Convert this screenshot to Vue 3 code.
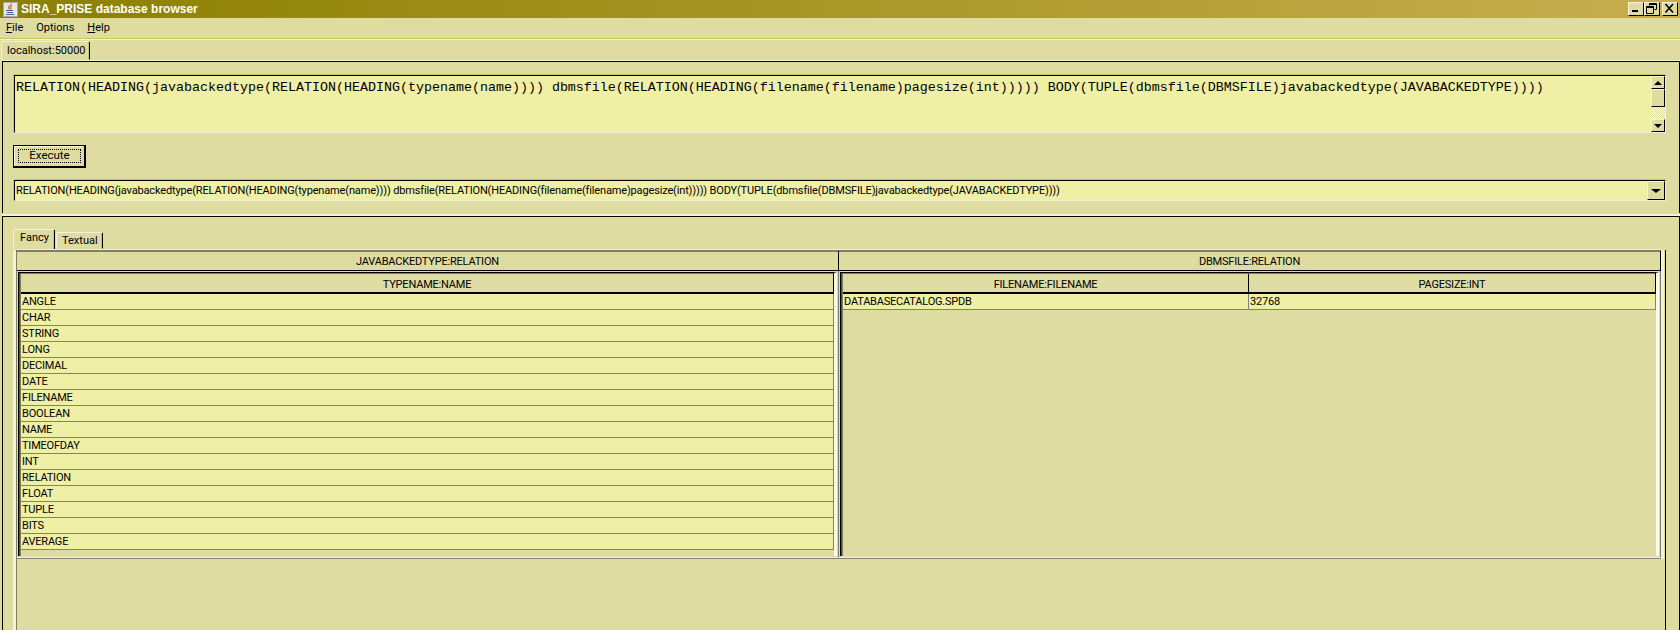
<script setup>
const rows = ['ANGLE','CHAR','STRING','LONG','DECIMAL','DATE','FILENAME','BOOLEAN','NAME','TIMEOFDAY','INT','RELATION','FLOAT','TUPLE','BITS','AVERAGE']
const expr = 'RELATION(HEADING(javabackedtype(RELATION(HEADING(typename(name)))) dbmsfile(RELATION(HEADING(filename(filename)pagesize(int))))) BODY(TUPLE(dbmsfile(DBMSFILE)javabackedtype(JAVABACKEDTYPE))))'
</script>

<template>
  <div class="win">
    <header class="title">
      <svg class="jicon" width="15" height="15" viewBox="0 0 15 15">
        <rect x="0.5" y="0.5" width="14" height="14" fill="#e6e6ea" stroke="#a8a8c0"/>
        <path d="M8.500 1.500C6.500 3.500 9.500 4.500 7.500 7.500M6.500 3.500C4.500 5.500 6.500 6.500 6 7.500" fill="none" stroke="#d8641c" stroke-width="1.3"/>
        <path d="M3 8.500h7M4 10.500h6M3 12.500h8" stroke="#44659a" stroke-width="1.1"/>
      </svg>
      <span class="title-text">SIRA_PRISE database browser</span>
      <div class="winbtns">
        <button class="wb"><svg width="15" height="13" viewBox="0 0 15 13"><path d="M4 8h6v2H4z" fill="#000"/></svg></button>
        <button class="wb"><svg width="15" height="13" viewBox="0 0 15 13"><path d="M5.500 1.500h7v6h-2M5.500 1.500v2M5.500 2.500h7M2.500 4.500h7v7h-7zM2.500 5.500h7" fill="none" stroke="#000"/></svg></button>
        <button class="wb close"><svg width="15" height="13" viewBox="0 0 15 13"><path d="M3.500 2l7.500 8.500M11 2L3.500 10.500" fill="none" stroke="#000" stroke-width="1.6"/></svg></button>
      </div>
    </header>

    <nav class="menu">
      <span><u>F</u>ile</span>
      <span>Options</span>
      <span><u>H</u>elp</span>
    </nav>

    <div class="tabs-top">
      <div class="tab-main">localhost:50000</div>
    </div>

    <section class="upper">
      <div class="textarea">
        <div class="ta-text">{{ expr }}</div>
        <div class="vscroll">
          <button class="sb-btn"><i class="up"></i></button>
          <div class="sb-thumb"></div>
          <div class="sb-track"></div>
          <button class="sb-btn"><i class="down"></i></button>
        </div>
      </div>
      <button class="exec"><span>Execute</span></button>
      <div class="combo">
        <div class="combo-text">{{ expr }}</div>
        <button class="combo-btn"><i class="down big"></i></button>
      </div>
    </section>

    <section class="lower">
      <div class="subtabs">
        <div class="subtab active">Fancy</div>
        <div class="subtab">Textual</div>
      </div>
      <div class="content">
        <div class="outer">
          <div class="ocol">
            <div class="ohead">JAVABACKEDTYPE:RELATION</div>
            <div class="cellwrap">
              <div class="inner">
                <div class="ihead"><div class="ih">TYPENAME:NAME</div></div>
                <div v-for="r in rows" :key="r" class="row"><div class="td">{{ r }}</div></div>
              </div>
            </div>
          </div>
          <div class="ocol">
            <div class="ohead">DBMSFILE:RELATION</div>
            <div class="cellwrap">
              <div class="inner">
                <div class="ihead">
                  <div class="ih c1">FILENAME:FILENAME</div>
                  <div class="ih c2">PAGESIZE:INT</div>
                </div>
                <div class="row">
                  <div class="td c1">DATABASECATALOG.SPDB</div>
                  <div class="td c2">32768</div>
                </div>
              </div>
            </div>
          </div>
        </div>
      </div>
    </section>
  </div>
</template>

<style>
html, body { margin: 0; background: #dedca0; overflow: hidden; }
</style>

<style scoped>
.win {
  width: 1680px; height: 630px; overflow: hidden; background: #dedca0; color: #000;
  font: 11px/1 Roboto, "Liberation Sans", Arial, sans-serif; display: flex; flex-direction: column;
}
button { padding: 0; margin: 0; font: inherit; color: inherit; }
.title {
  height: 18px; flex: none; display: flex; align-items: center;
  background: linear-gradient(90deg, #8a8000, #c8ae50);
}
.jicon { margin: 0 3px 0 3px; }
.title-text { color: #fff; font: bold 12px/1 "Liberation Sans", Arial, sans-serif; }
.winbtns { margin-left: auto; display: flex; margin-right: 2px; }
.wb {
  width: 16px; height: 14px; box-sizing: border-box; background: #dedca0; display: block;
  border: 1px solid; border-color: #f4f4dc #000 #000 #f4f4dc; overflow: hidden;
}
.wb svg { display: block; margin: -1px 0 0 -1px; }
.wb.close { margin-left: 2px; }
.menu {
  height: 21px; flex: none; box-sizing: border-box; display: flex; align-items: center;
  padding: 0 0 1px 6px; gap: 13px; font-size: 11px; border-bottom: 1px solid #c8c85c;
}
.tabs-top {
  height: 21px; flex: none; box-sizing: border-box; display: flex; align-items: flex-end;
  padding-left: 1px; border-top: 1px solid #f2f2d4;
}
.tab-main {
  width: 89px; height: 19px; box-sizing: border-box; padding: 3px 0 0 5px; font-size: 11px;
  border: 1px solid; border-color: #f2f2d4 #000 transparent #f2f2d4; border-radius: 2px 2px 0 0;
  border-right: 1px solid #000; box-shadow: inset -1px 0 0 #c8c85c;
}
.upper {
  height: 152px; flex: none; box-sizing: border-box; padding: 13px 13px 0 11px; margin: 1px 0 0 2px;
  border-top: 1px solid #000; border-left: 1px solid #000;
  border-right: 1px solid #000; display: flex; flex-direction: column; align-items: flex-start;
  box-shadow: 0 -1px 0 #f2f2d4;
}
.textarea {
  width: 1652px; height: 58px; flex: none; box-sizing: border-box; background: #efefa6; display: flex;
  border: 1px solid; border-color: #000 #f2f2d4 #f2f2d4 #000;
  box-shadow: -1px -1px 0 #c8c85c;
}
.ta-text {
  flex: 1; padding: 4px 0 0 1px; font: 13.33px/16px "Liberation Mono", "Courier New", monospace;
  white-space: pre; overflow: hidden;
}
.vscroll { width: 14px; flex: none; display: flex; flex-direction: column; }
.sb-btn {
  height: 13px; flex: none; background: #dedca0; box-sizing: border-box;
  border: 1px solid; border-color: #f4f4dc #000 #000 #f4f4dc; display: flex; align-items: center; justify-content: center;
}
.sb-thumb {
  height: 18px; flex: none; background: #dedca0; box-sizing: border-box;
  border: 1px solid; border-color: #f4f4dc #000 #000 #f4f4dc;
}
.sb-track { flex: 1; background: repeating-conic-gradient(#fbfbf0 0 25%, #dedca0 0 50%) 0 0 / 2px 2px; }
i { display: block; width: 0; height: 0; border-style: solid; border-color: transparent; }
i.up { border-width: 0 4px 4px; border-bottom-color: #000; }
i.down { border-width: 4px 4px 0; border-top-color: #000; }
i.down.big { border-width: 4px 5px 0; }
.exec {
  width: 73px; height: 23px; margin: 12px 0 0 -1px; flex: none; box-sizing: border-box; background: #dedca0;
  border: 2px solid #000; border-left-width: 1px; border-top-width: 1px;
  box-shadow: inset 1px 1px 0 #f4f4dc; padding: 3px 3px 3px 4px; font-size: 11.500px;
}
.exec span {
  display: flex; height: 100%; align-items: center; justify-content: center;
  outline: 1px dotted #000; outline-offset: -1px;
}
.combo {
  width: 1652px; height: 21px; flex: none; box-sizing: border-box; margin-top: 12px; background: #efefa6; display: flex;
  border: 1px solid; border-color: #000 #f2f2d4 #f2f2d4 #000; box-shadow: -1px -1px 0 #c8c85c;
}
.combo-text { flex: 1; padding: 4px 0 0 1px; font-size: 11px; letter-spacing: -0.15px; white-space: pre; overflow: hidden; }
.combo-btn {
  width: 18px; flex: none; background: #dedca0; box-sizing: border-box;
  border: 1px solid; border-color: #f4f4dc #000 #000 #f4f4dc; display: flex; align-items: center; justify-content: center;
}
.lower {
  flex: 1; min-height: 0; box-sizing: border-box; margin: 3px 0 0 2px; padding: 12px 13px 0 10px;
  border-top: 1px solid #000; border-left: 1px solid #000; border-right: 1px solid #000;
  box-shadow: 0 -2px 0 #f2f2d4;
  display: flex; flex-direction: column;
}
.subtabs { height: 21px; flex: none; display: flex; align-items: flex-start; gap: 1px; }
.subtab {
  box-sizing: border-box; width: 47px; height: 17px; margin-top: 3px; padding: 2px 0 0 5px; font-size: 11px;
  border: 1px solid; border-color: #f2f2d4 #000 transparent #f2f2d4; border-radius: 2px 2px 0 0;
  box-shadow: inset -1px 0 0 #c8c85c;
}
.subtab.active { height: 21px; width: 42px; margin-top: 0; padding: 2px 0 0 6px; border-right-color: #000; }
.content {
  flex: 1; min-height: 0; box-sizing: border-box; padding-left: 1px;
  border-left: 3px solid #f2f2d4; border-right: 1px solid #000; box-shadow: inset 1px 0 0 #808060;
}
.outer {
  width: 1644px; height: 309px; display: flex; box-sizing: border-box;
  border-bottom: 1px solid #808080;
  box-shadow: 0 -1px 0 #f2f2d4, 3px 0 0 #f2f2d4;
}
.ocol { width: 822px; display: flex; flex-direction: column; min-width: 0; letter-spacing: -0.2px; }
.ohead {
  height: 21px; flex: none; box-sizing: border-box; text-align: center; padding-top: 4px;
  border-top: 2px solid #808060; border-bottom: 1px solid #000; border-right: 1px solid #000;
}
.cellwrap {
  flex: 1; min-height: 0; display: flex; box-sizing: border-box; padding: 1px 1px 1px 1px;
  border-right: 1px solid #808080; border-bottom: 1px solid #f2f2d4;
}
.inner {
  flex: 1; min-width: 0; box-sizing: border-box; border-left: 1px solid #000; border-top: 1px solid #000;
  border-right: 3px solid #fbfbe4;
  box-shadow: inset 1px 0 0 #50502a, inset 2px 0 0 #808060, inset 0 1px 0 #808060; padding-left: 2px;
}
.ihead { display: flex; height: 21px; box-sizing: border-box; border-bottom: 2px solid #000; border-right: 1px solid #000; padding-top: 1px; }
.ih { flex: 1; text-align: center; padding-top: 5px; box-sizing: border-box; }
.row { display: flex; height: 16px; box-sizing: border-box; background: #efefa6; border-bottom: 1px solid #808080; border-right: 1px solid #808080; }
.td { flex: 1; padding: 2px 0 0 1px; box-sizing: border-box; white-space: pre; }
.c1 { flex: none; width: 406px; border-right: 1px solid #808080; }
.c2 { flex: 1; }
.ih.c1 { border-right: 1px solid #000; }
</style>
